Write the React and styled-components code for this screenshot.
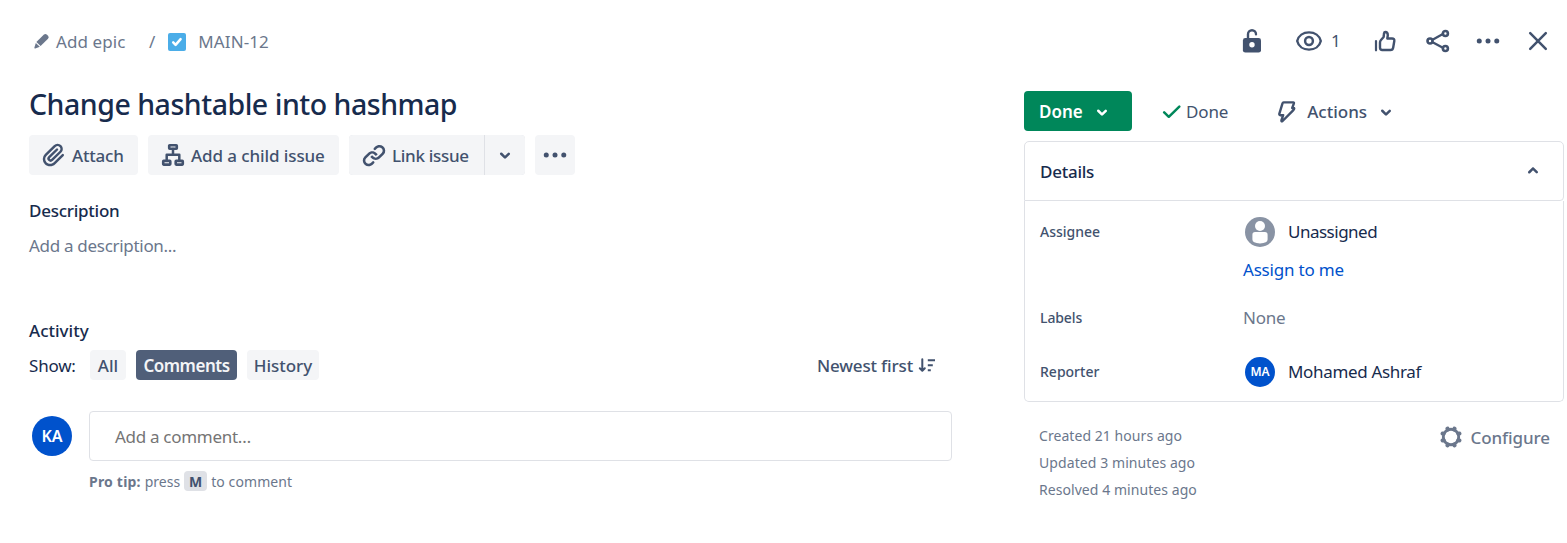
import React from "react";
import styled, { createGlobalStyle } from "styled-components";

const Global = createGlobalStyle`
  * { box-sizing: border-box; }
  body {
    margin: 0;
    background: #fff;
    font-family: "Noto Sans", "Open Sans", sans-serif;
    color: #172b4d;
  }
  button { font: inherit; border: 0; margin: 0; padding: 0; background: none; }
  svg { display: block; flex: none; }
`;

const C = {
  navy: "#172b4d",
  slate: "#42526e",
  grey: "#6b778c",
  fill: "#f4f5f7",
  line: "#dfe1e6",
  green: "#00875a",
  blue: "#0052cc",
};

const Text = styled.span`
  display: block;
  font-size: ${(p) => p.$size || 17}px;
  font-weight: ${(p) => p.$weight || 400};
  line-height: 24px;
  letter-spacing: ${(p) => p.$track || 0}px;
  color: ${(p) => p.$color || "inherit"};
  white-space: nowrap;
`;

const Page = styled.div`
  width: 1567px;
  height: 543px;
  overflow: hidden;
  background: #fff;
`;

const Header = styled.header`
  display: flex;
  justify-content: space-between;
  align-items: center;
  height: 82px;
  padding: 0 14px 0 29px;
`;

const Breadcrumbs = styled.nav`
  display: flex;
  align-items: center;
  color: ${C.grey};
  padding-top: 1px;
`;

const Epic = styled.span`
  display: flex;
  align-items: center;
  gap: 2px;
  width: 120px;
`;

const IssueKey = styled.span`
  display: flex;
  align-items: center;
  gap: 12px;
  margin-left: 13px;
`;

const HeaderActions = styled.div`
  display: grid;
  grid-template-columns: 57px 76px 53px 50px 50px 30px;
  align-items: center;
  width: 316px;
  color: ${C.slate};
`;

const Watch = styled.button`
  display: flex;
  align-items: center;
  gap: 7px;
  color: inherit;
`;

const Content = styled.div`
  display: flex;
  gap: 72px;
  padding: 3px 3px 0 29px;
`;

const Main = styled.main`
  width: 923px;
`;

const Title = styled.h1`
  margin: 0 0 10px;
  height: 40px;
  font-size: 28.5px;
  font-weight: 500;
  line-height: 39px;
  letter-spacing: -0.48px;
  color: ${C.navy};
`;

const Toolbar = styled.div`
  display: flex;
  gap: 10px;
  height: 40px;
`;

const ToolButton = styled.button`
  display: flex;
  align-items: center;
  justify-content: ${(p) => (p.$center ? "center" : "flex-start")};
  gap: 3px;
  width: ${(p) => p.$width}px;
  height: 40px;
  padding-left: ${(p) => (p.$center ? 0 : 10)}px;
  border-radius: ${(p) => p.$radius || "4px"};
  background: ${C.fill};
  color: ${C.slate};
  > span { padding-top: 1px; }
`;

const SplitButton = styled.div`
  display: flex;
  gap: 1px;
  background: ${C.line};
  border-radius: 4px;
`;

const Section = styled.section`
  margin-top: ${(p) => p.$top}px;
`;

const Filters = styled.div`
  display: flex;
  align-items: center;
  height: 30px;
  margin-top: 7px;
  > span { padding-top: 2px; width: 47px; }
`;

const FilterList = styled.div`
  display: flex;
  gap: 10px;
  margin-left: 14px;
`;

const Filter = styled.button`
  display: flex;
  justify-content: center;
  align-items: center;
  width: ${(p) => p.$width}px;
  height: 30px;
  padding-top: 2px;
  border-radius: 4px;
  background: ${(p) => (p.$active ? "#505f79" : C.fill)};
  color: ${(p) => (p.$active ? "#f4f5f7" : C.slate)};
`;

const Sort = styled.button`
  display: flex;
  align-items: center;
  gap: 5px;
  margin: 2px 16px 0 auto;
  color: ${C.slate};
`;

const CommentRow = styled.div`
  display: flex;
  align-items: center;
  gap: 17px;
  margin-top: 31px;
  padding-left: 3px;
`;

const Avatar = styled.span`
  display: flex;
  align-items: center;
  justify-content: center;
  flex: none;
  width: ${(p) => p.$size}px;
  height: ${(p) => p.$size}px;
  border-radius: 50%;
  background: ${C.blue};
  color: #fff;
`;

const CommentBox = styled.div`
  display: flex;
  align-items: center;
  flex: 1;
  height: 50px;
  padding: 1px 0 0 25px;
  border: 1px solid ${C.line};
  border-radius: 4px;
`;

const Tip = styled.div`
  display: flex;
  align-items: center;
  height: 20px;
  margin: 10px 0 0 60px;
  gap: 4px;
  color: ${C.grey};
  > span { padding-top: 1px; }
`;

const Key = styled.kbd`
  display: flex;
  align-items: center;
  justify-content: center;
  width: 23px;
  height: 20px;
  padding-top: 2px;
  border-radius: 4px;
  background: ${C.line};
  font-family: inherit;
  color: ${C.slate};
`;

const Side = styled.aside`
  width: 540px;
  padding-top: 6px;
`;

const StatusRow = styled.div`
  display: flex;
  align-items: center;
  height: 40px;
`;

const StatusButton = styled.button`
  display: flex;
  align-items: center;
  gap: 4px;
  width: 108px;
  height: 40px;
  padding: 1px 0 0 15px;
  border-radius: 4px;
  background: ${C.green};
  color: #fff;
`;

const Resolution = styled.span`
  display: flex;
  align-items: center;
  gap: 5px;
  margin: 2px 0 0 30px;
  color: ${C.slate};
`;

const ActionsButton = styled.button`
  display: flex;
  align-items: center;
  gap: 4px;
  margin: 1px 0 0 45px;
  color: ${C.slate};
`;

const PanelHead = styled.div`
  display: flex;
  align-items: center;
  justify-content: space-between;
  height: 60px;
  margin-top: 10px;
  padding: 2px 15px 0 15px;
  border: 1px solid ${C.line};
  border-radius: 5px 5px 4px 0;
  svg { color: ${C.slate}; margin-bottom: 2px; }
`;

const PanelBody = styled.div`
  height: 201px;
  padding: 15px 15px 0;
  border: 1px solid ${C.line};
  border-top: 0;
  border-radius: 0 0 5px 5px;
`;

const Field = styled.div`
  display: grid;
  grid-template-columns: 203px 1fr;
  height: ${(p) => p.$height}px;
`;

const FieldLabel = styled.div`
  display: flex;
  align-items: center;
  height: 32px;
  color: ${C.slate};
`;

const Person = styled.div`
  display: flex;
  align-items: center;
  gap: 13px;
  height: 32px;
  padding-left: 2px;
`;

const Footer = styled.footer`
  display: flex;
  justify-content: space-between;
  padding: 22px 14px 0 15px;
  color: ${C.grey};
`;

const Dates = styled.div`
  display: grid;
  grid-auto-rows: 27px;
`;

const Configure = styled.button`
  display: flex;
  align-items: center;
  gap: 9px;
  height: 27px;
  color: ${C.grey};
  svg { margin-bottom: 2px; }
`;

const Icon = ({ size = 30, box = 24, children }) => (
  <svg width={size} height={size} viewBox={`0 0 ${box} ${box}`} fill="none" stroke="currentColor" strokeLinecap="round" strokeLinejoin="round">
    {children}
  </svg>
);

const Solid = ({ d, size = 30 }) => (
  <svg width={size} height={size} viewBox="0 0 24 24" fill="currentColor" fillRule="evenodd">
    {[].concat(d).map((path) => <path key={path} d={path} />)}
  </svg>
);

const CHEVRON = "M8.292 10.293a1.009 1.009 0 0 0 0 1.419l2.939 2.965c.218.215.5.322.779.322s.556-.107.769-.322l2.93-2.955a1.01 1.01 0 0 0 0-1.419.987.987 0 0 0-1.406 0l-2.298 2.317-2.307-2.327a.99.99 0 0 0-1.406 0z";
const CHEVRON_UP = "M8.292 13.707a1.009 1.009 0 0 1 0-1.419l2.939-2.965c.218-.215.5-.322.779-.322s.556.107.769.322l2.93 2.955a1.01 1.01 0 0 1 0 1.419.987.987 0 0 1-1.406 0l-2.298-2.317-2.307 2.327a.99.99 0 0 1-1.406 0z";
const CLIP = "M11.643 17.965c-1.53 1.495-4.016 1.496-5.542.004a3.773 3.773 0 0 1 .002-5.412l7.147-6.985a2.316 2.316 0 0 1 3.233-.003c.893.873.895 2.282.004 3.153l-6.703 6.55a.653.653 0 0 1-.914-.008.62.62 0 0 1 0-.902l6.229-6.087a.941.941 0 0 0 0-1.353.995.995 0 0 0-1.384 0l-6.23 6.087a2.502 2.502 0 0 0 0 3.607 2.643 2.643 0 0 0 3.683.009l6.703-6.55a4.175 4.175 0 0 0-.003-5.859 4.274 4.274 0 0 0-6.002.003l-7.148 6.985a5.655 5.655 0 0 0-.002 8.118c2.29 2.237 6.016 2.235 8.308-.004l6.703-6.55a.941.941 0 0 0 0-1.353.995.995 0 0 0-1.384 0l-6.7 6.55z";
const LINK = [
  "M12.856 5.457l-.937.92a1.002 1.002 0 0 0 0 1.437 1.047 1.047 0 0 0 1.463 0l.984-.966c.967-.95 2.542-1.135 3.602-.288a2.54 2.54 0 0 1 .203 3.81l-2.903 2.852a2.646 2.646 0 0 1-3.696 0l-1.11-1.09L9 13.57l1.108 1.089c1.822 1.788 4.802 1.788 6.622 0l2.905-2.852a4.558 4.558 0 0 0-.357-6.82c-1.893-1.517-4.695-1.226-6.422.47",
  "M11.144 19.543l.937-.92a1.002 1.002 0 0 0 0-1.437 1.047 1.047 0 0 0-1.462 0l-.985.966c-.967.95-2.542 1.135-3.602.288a2.54 2.54 0 0 1-.203-3.81l2.903-2.852a2.646 2.646 0 0 1 3.696 0l1.11 1.09L15 11.43l-1.108-1.089c-1.822-1.788-4.802-1.788-6.622 0l-2.905 2.852a4.558 4.558 0 0 0 .357 6.82c1.893 1.517 4.695 1.226 6.422-.47",
];

const ChevronDown = () => <Solid d={CHEVRON} />;

const Pencil = () => (
  <svg width="25" height="25" viewBox="0 0 25 25" fill="currentColor">
    <path d="M5.4 18.6 6.8 13.9 10.8 17.7 6.3 19.4Q5.2 19.7 5.4 18.6z" />
    <path d="M7.4 12.9 14.7 5.7Q16.4 4.3 18 5.7L19 6.7Q20.5 8.3 19 9.8L11.6 17z" />
  </svg>
);

const TaskType = () => (
  <svg width="18" height="18" viewBox="0 0 18 18">
    <rect width="18" height="18" rx="2" fill="#4bade8" />
    <path d="M5.2 9.4 7.6 11.8 12.6 6.2" fill="none" stroke="#fff" strokeWidth="2.5" strokeLinecap="round" strokeLinejoin="round" />
  </svg>
);

const Lock = () => (
  <Icon box={30}>
    <rect x="5.9" y="12" width="18.1" height="14.6" rx="2.4" fill="currentColor" stroke="none" />
    <path d="M11 12.5V8.3a4 4 0 0 1 8 0" strokeWidth="2.4" />
    <circle cx="15" cy="18.8" r="2.7" fill="#fff" stroke="none" />
  </Icon>
);

const Eye = () => (
  <Icon box={30} size={30}>
    <path d="M3.2 15C4.5 9.5 9.2 6.4 15 6.4S25.5 9.5 26.8 15C25.5 20.5 20.8 23.6 15 23.6S4.5 20.5 3.2 15z" strokeWidth="2.4" />
    <circle cx="15" cy="15" r="3.9" strokeWidth="2.5" />
  </Icon>
);

const ThumbUp = () => (
  <Icon box={30}>
    <path d="M6 15v9.3" strokeWidth="2.2" />
    <path d="M10 21.8V16.4Q10 15.1 11 14L13.2 11.5Q13.7 10.9 13.8 10L14 7.4Q14.2 6 15.4 6 17.8 6.1 17.8 9.2L17.3 12.5H22Q24.7 12.5 24.3 15L23.2 21.5Q22.8 24 20.5 24H12.2Q10 24 10 21.8z" strokeWidth="2.4" />
  </Icon>
);

const Share = () => (
  <Icon box={30}>
    <path d="M9.6 13.7 19.4 8.2M9.6 16.2 19.4 21.6" strokeWidth="2.3" />
    <circle cx="7" cy="15" r="2.5" strokeWidth="2.6" />
    <circle cx="22.4" cy="7.5" r="2.5" strokeWidth="2.6" />
    <circle cx="22.4" cy="22.5" r="2.5" strokeWidth="2.6" />
  </Icon>
);

const More = () => (
  <Solid d={["M14 12a2 2 0 1 1-4 0 2 2 0 0 1 4 0z", "M7 12a2 2 0 1 1-4 0 2 2 0 0 1 4 0z", "M21 12a2 2 0 1 1-4 0 2 2 0 0 1 4 0z"]} />
);

const Close = () => (
  <Icon box={30}>
    <path d="M7.2 7.2l15.6 15.6M22.8 7.2 7.2 22.8" strokeWidth="2.5" />
  </Icon>
);

const ChildIssue = () => (
  <Icon box={30}>
    <rect x="11.2" y="5.2" width="7.6" height="3.6" rx="0.5" strokeWidth="2.6" />
    <rect x="5.2" y="20.9" width="7.1" height="3.7" rx="0.5" strokeWidth="2.6" />
    <rect x="17.7" y="20.9" width="7.1" height="3.7" rx="0.5" strokeWidth="2.6" />
    <path d="M15 9v5.8M8.7 20.5v-5.7h12.6v5.7" strokeWidth="2.5" />
  </Icon>
);

const Check = () => (
  <svg width="19" height="14" viewBox="0 0 19 14" fill="none" stroke={C.green} strokeWidth="2.5" strokeLinecap="round" strokeLinejoin="round">
    <path d="M2.2 7.4 6.8 11.8 17.3 1.6" />
  </svg>
);

const Bolt = () => (
  <Icon box={30}>
    <path d="M10.6 5.4H20.2Q21.2 5.5 20.9 6.4L19.2 11H20.6Q21.6 11.1 21 12.2L19.4 14.2 9.6 24Q8.2 25 8.4 23.4L10.2 18.2H7.4Q6.1 18 6.3 16.8L9.5 6.3Q9.8 5.4 10.6 5.4z" strokeWidth="2.4" />
  </Icon>
);

const SortIcon = () => (
  <svg width="18" height="16" viewBox="0 0 18 16" fill="none" stroke="currentColor" strokeWidth="2" strokeLinecap="round" strokeLinejoin="round">
    <path d="M4.3 1.3v10.7M1.8 10.2 4.3 12.7 6.8 10.2" />
    <path d="M9.8 2.3H17M9.8 7.3h5M9.8 12.3h3" strokeLinecap="butt" />
  </svg>
);

const UnassignedIcon = () => (
  <svg width="30" height="30" viewBox="0 0 30 30">
    <circle cx="15" cy="15" r="15" fill="#8993a4" />
    <circle cx="15" cy="9" r="5" fill="#fff" />
    <path d="M7.4 17.8Q7.4 15.1 10.1 15.1H19.9Q22.6 15.1 22.6 17.8V22.6Q22.6 26.4 15 26.4T7.4 22.6z" fill="#fff" />
  </svg>
);

const Gear = () => (
  <svg width="22" height="22" viewBox="0 0 22 22" fill="none" stroke="currentColor">
    <circle cx="11" cy="11" r="7.7" strokeWidth="2.9" />
    {[22.5, 67.5, 112.5, 157.5, 202.5, 247.5, 292.5, 337.5].map((a) => (
      <path key={a} d="M11 2.8V2" strokeWidth="4.2" strokeLinecap="round" transform={`rotate(${a} 11 11)`} />
    ))}
  </svg>
);

export default function App() {
  return (
    <Page>
      <Global />
      <Header>
        <Breadcrumbs>
          <Epic>
            <Pencil />
            <Text $track={0.08}>Add epic</Text>
          </Epic>
          <Text>/</Text>
          <IssueKey>
            <TaskType />
            <Text $track={0.1}>MAIN-12</Text>
          </IssueKey>
        </Breadcrumbs>
        <HeaderActions>
          <Lock />
          <Watch>
            <Eye />
            <Text>1</Text>
          </Watch>
          <ThumbUp />
          <Share />
          <More />
          <Close />
        </HeaderActions>
      </Header>
      <Content>
        <Main>
          <Title>Change hashtable into hashmap</Title>
          <Toolbar>
            <ToolButton $width={109}>
              <Solid d={CLIP} />
              <Text $weight={500} $track={-0.2}>Attach</Text>
            </ToolButton>
            <ToolButton $width={191}>
              <ChildIssue />
              <Text $weight={500} $track={-0.1}>Add a child issue</Text>
            </ToolButton>
            <SplitButton>
              <ToolButton $width={135} $radius="4px 0 0 4px">
                <Solid d={LINK} />
                <Text $weight={500} $track={-0.3}>Link issue</Text>
              </ToolButton>
              <ToolButton $width={40} $center $radius="0 4px 4px 0">
                <ChevronDown />
              </ToolButton>
            </SplitButton>
            <ToolButton $width={40} $center>
              <More />
            </ToolButton>
          </Toolbar>
          <Section $top={24}>
            <Text $weight={500} $track={-0.26}>Description</Text>
          </Section>
          <Section $top={11}>
            <Text $color={C.grey} $track={-0.3}>Add a description...</Text>
          </Section>
          <Section $top={61}>
            <Text $weight={500}>Activity</Text>
            <Filters>
              <Text $track={-0.2}>Show:</Text>
              <FilterList>
                <Filter $width={36}><Text $weight={500}>All</Text></Filter>
                <Filter $width={101} $active><Text $weight={600} $track={-0.5}>Comments</Text></Filter>
                <Filter $width={72}><Text $weight={500} $track={-0.05}>History</Text></Filter>
              </FilterList>
              <Sort>
                <Text $weight={500} $track={-0.15}>Newest first</Text>
                <SortIcon />
              </Sort>
            </Filters>
            <CommentRow>
              <Avatar $size={40}><Text $weight={600} $size={16}>KA</Text></Avatar>
              <CommentBox>
                <Text $color="#757575" $track={-0.3}>Add a comment…</Text>
              </CommentBox>
            </CommentRow>
            <Tip>
              <Text $size={14} $weight={700} $track={0.2}>Pro tip:</Text>
              <Text $size={14}>press</Text>
              <Key><Text $size={14} $weight={700}>M</Text></Key>
              <Text $size={14} $track={0.1}>to comment</Text>
            </Tip>
          </Section>
        </Main>
        <Side>
          <StatusRow>
            <StatusButton>
              <Text $weight={600}>Done</Text>
              <ChevronDown />
            </StatusButton>
            <Resolution>
              <Check />
              <Text $track={-0.15}>Done</Text>
            </Resolution>
            <ActionsButton>
              <Bolt />
              <Text $weight={500}>Actions</Text>
              <ChevronDown />
            </ActionsButton>
          </StatusRow>
          <PanelHead>
            <Text $weight={500} $track={-0.25}>Details</Text>
            <Solid d={CHEVRON_UP} />
          </PanelHead>
          <PanelBody>
            <Field $height={86}>
              <FieldLabel><Text $size={14} $weight={500}>Assignee</Text></FieldLabel>
              <div>
                <Person>
                  <UnassignedIcon />
                  <Text $color={C.navy} $track={-0.5}>Unassigned</Text>
                </Person>
                <Section $top={10}>
                  <Text $color={C.blue} $track={-0.2}>Assign to me</Text>
                </Section>
              </div>
            </Field>
            <Field $height={54}>
              <FieldLabel><Text $size={14} $weight={500} $track={-0.1}>Labels</Text></FieldLabel>
              <Section $top={4}><Text $color={C.grey} $track={-0.2}>None</Text></Section>
            </Field>
            <Field $height={32}>
              <FieldLabel><Text $size={14} $weight={500}>Reporter</Text></FieldLabel>
              <Person>
                <Avatar $size={30}><Text $size={12} $weight={600}>MA</Text></Avatar>
                <Text $color={C.navy} $track={-0.33}>Mohamed Ashraf</Text>
              </Person>
            </Field>
          </PanelBody>
          <Footer>
            <Dates>
              <Text $size={14} $track={0.06}>Created 21 hours ago</Text>
              <Text $size={14} $track={0.08}>Updated 3 minutes ago</Text>
              <Text $size={14} $track={0.06}>Resolved 4 minutes ago</Text>
            </Dates>
            <Configure>
              <Gear />
              <Text $weight={500} $track={-0.1}>Configure</Text>
            </Configure>
          </Footer>
        </Side>
      </Content>
    </Page>
  );
}
